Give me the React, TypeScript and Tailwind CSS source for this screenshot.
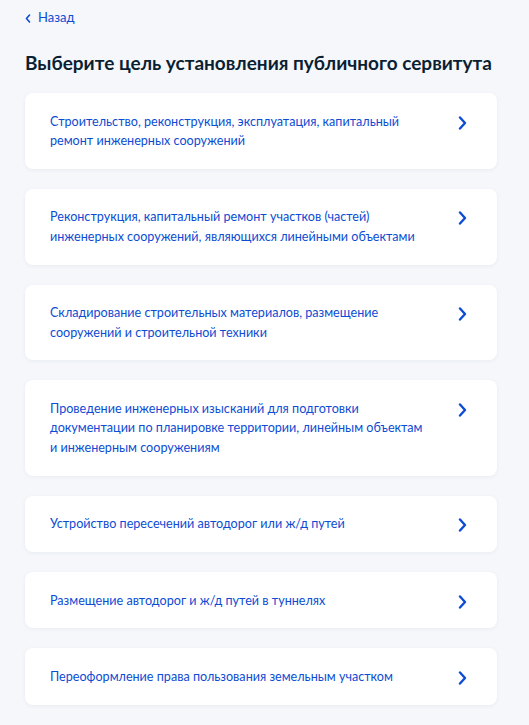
import React from "react";

const items: string[][] = [
  ["Строительство, реконструкция, эксплуатация, капитальный", "ремонт инженерных сооружений"],
  ["Реконструкция, капитальный ремонт участков (частей)", "инженерных сооружений, являющихся линейными объектами"],
  ["Складирование строительных материалов, размещение", "сооружений и строительной техники"],
  [
    "Проведение инженерных изысканий для подготовки",
    "документации по планировке территории, линейным объектам",
    "и инженерным сооружениям",
  ],
  ["Устройство пересечений автодорог или ж/д путей"],
  ["Размещение автодорог и ж/д путей в туннелях"],
  ["Переоформление права пользования земельным участком"],
];

function Chevron() {
  return (
    <svg width="9" height="14" viewBox="0 0 9 14" fill="none" className="shrink-0">
      <path d="M2 1.5L7 7L2 12.5" stroke="#0d4cd3" strokeWidth="2.4" strokeLinecap="round" strokeLinejoin="round" />
    </svg>
  );
}

export default function App() {
  return (
    <div
      className="min-h-[725px] w-full bg-[#f5f7fb] pl-[25px] pr-[32px] pt-[10px] pb-[20px]"
      style={{ fontFamily: "Lato, 'Noto Sans', sans-serif" }}
    >
      <div className="flex items-center gap-[7px] h-[16px] text-[13px] text-[#0d4cd3]">
        <svg width="6" height="9" viewBox="0 0 6 9" fill="none">
          <path d="M4.5 1L1.5 4.5L4.5 8" stroke="#0d4cd3" strokeWidth="1.6" strokeLinecap="round" strokeLinejoin="round" />
        </svg>
        <span>Назад</span>
      </div>
      <h1 className="mt-[24px] text-[19px] leading-[26px] font-bold text-[#0b1f33] whitespace-nowrap">
        Выберите цель установления публичного сервитута
      </h1>
      <div className="mt-[17px] flex flex-col gap-[20px]">
        {items.map((lines, i) => (
          <div
            key={i}
            className="flex items-start justify-between rounded-[8px] bg-white pl-[25px] pr-[30px] py-[18.5px] shadow-[0_1px_4px_rgba(16,43,90,0.06)]"
          >
            <div className="text-[12.6px] leading-[19.4px] text-[#0d4cd3]">
              {lines.map((l, j) => (
                <div key={j} className="whitespace-nowrap">{l}</div>
              ))}
            </div>
            <div className="mt-[4px]">
              <Chevron />
            </div>
          </div>
        ))}
      </div>
    </div>
  );
}
